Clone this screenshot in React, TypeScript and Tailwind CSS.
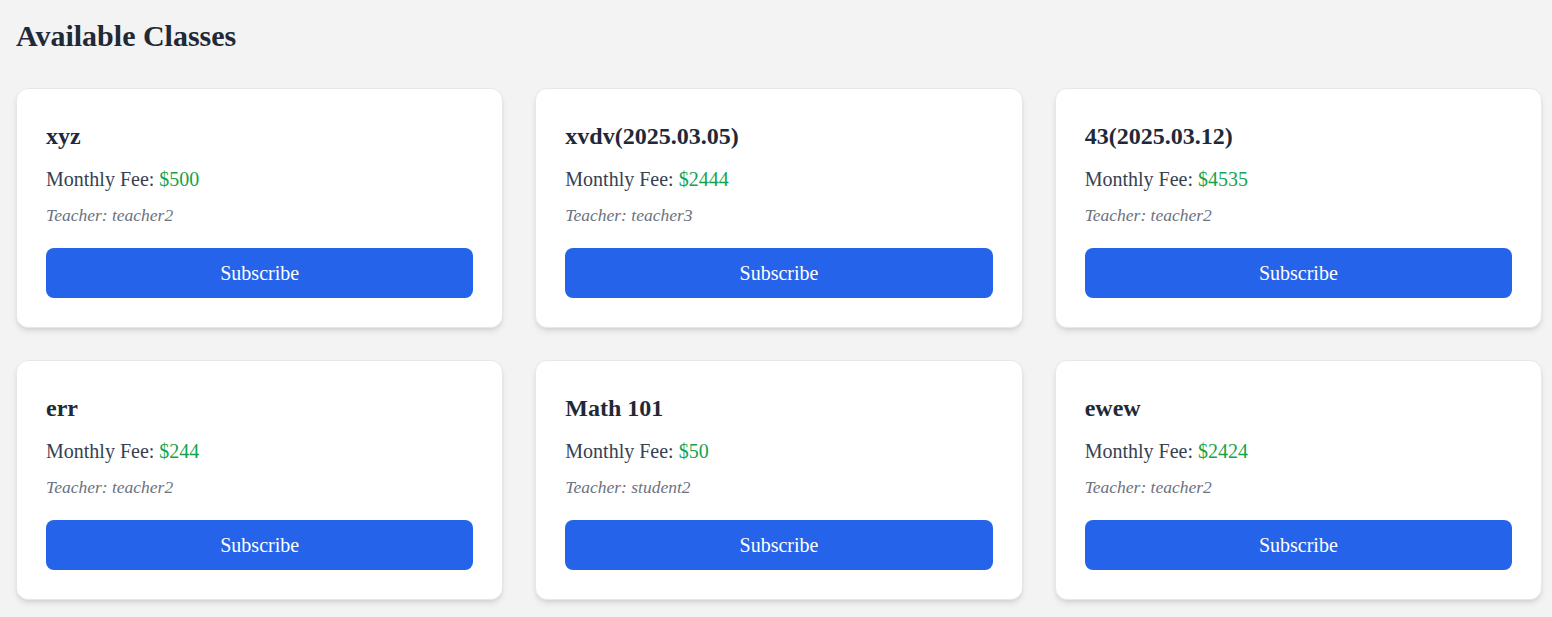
const classes = [
  { name: "xyz", fee: 500, teacher: "teacher2" },
  { name: "xvdv(2025.03.05)", fee: 2444, teacher: "teacher3" },
  { name: "43(2025.03.12)", fee: 4535, teacher: "teacher2" },
  { name: "err", fee: 244, teacher: "teacher2" },
  { name: "Math 101", fee: 50, teacher: "student2" },
  { name: "ewew", fee: 2424, teacher: "teacher2" },
];

export default function App() {
  return (
    <div className="min-h-screen bg-[#f3f3f3] pl-4 pr-[10px] pt-[18px] pb-4 font-['Liberation_Serif',serif]">
      <h1 className="text-3xl leading-9 font-bold text-[#1f2937] mb-[34px]">Available Classes</h1>
      <div className="grid grid-cols-3 gap-8">
        {classes.map((c) => (
          <div
            key={c.name}
            className="bg-white border border-[#e5e7eb] rounded-xl shadow-md px-[29px] pt-[31px] pb-[29px] flex flex-col"
          >
            <h3 className="text-2xl leading-8 font-bold text-[#1f2937] mb-[13px]">{c.name}</h3>
            <p className="text-xl leading-7 text-[#374151] mb-[10px]">
              Monthly Fee: <span className="text-[#16a34a]">${c.fee}</span>
            </p>
            <p className="text-[17.5px] leading-6 italic text-[#6b7280] mb-[21px]">Teacher: {c.teacher}</p>
            <button className="w-full h-[50px] bg-[#2563eb] text-white text-xl rounded-lg">
              Subscribe
            </button>
          </div>
        ))}
      </div>
    </div>
  );
}
